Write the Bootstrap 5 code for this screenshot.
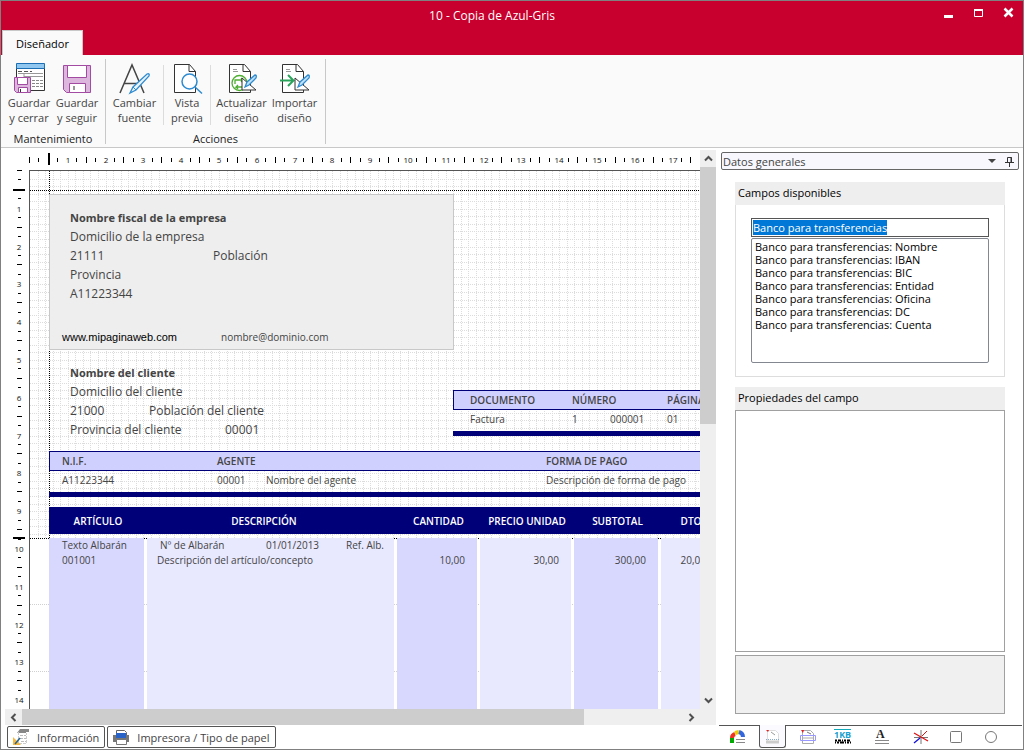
<!DOCTYPE html>
<html lang="es">
<head>
<meta charset="utf-8">
<meta name="viewport" content="width=device-width, initial-scale=1">
<title>10 - Copia de Azul-Gris</title>
<link href="https://cdn.jsdelivr.net/npm/bootstrap@5.3.0/dist/css/bootstrap.min.css" rel="stylesheet">
<style>
:root{--navy:#000078;--lilac:#d0d0ff;--col-a:#d8d8ff;--col-b:#e8e8ff;--ink:#444}
body{font-family:"Open Sans","Noto Sans",sans-serif;font-size:11px;line-height:15px;color:var(--ink);background:#fff;border:1px solid #808080;min-height:600px;overflow:hidden}
button{font:inherit;color:inherit;background:none;border:0;padding:0}
svg{display:block;flex:none}
.titlebar{background:#c8002d;color:#fff;height:29px}
.titlebar h1{font-size:12px;line-height:29px;padding-left:40px}
.win-btns{gap:16px;padding:5px 8px 0 0}
.tabs{background:#c8002d;height:25px}
.tab-on{background:#fafafa;color:#000;width:81px;margin-left:1px;border:1px solid #c8c8c8;border-bottom:0}
.ribbon{background:#fafafa;height:93px;border-bottom:1px solid #c8c8c8}
.rgroup{border-right:1px solid #c8c8c8;margin:4px 0 3px}
.rtools{height:72px}
.rtools button{width:48px;white-space:nowrap;padding-top:3px}
.rtools .wide{width:53px}
.rtools .slim{width:46px}
.rtools svg{margin:0 auto -1px}
.rsep{width:1px;height:60px;margin-top:6px;background:#dcdcdc}
.rname{color:#222;text-align:center}
.vruler{width:28px}
.hruler{height:22px}
.ruler text{font-size:8px;fill:#111;text-anchor:middle;font-family:"Open Sans",sans-serif}
.sheet{border-left:1px solid #555;border-top:1px solid #555;overflow:hidden;isolation:isolate}
.sheet-grid{position:absolute;inset:0;z-index:-1}
.sheet-body{padding:23px 0 0 19px;width:900px}
.company{width:405px;height:156px;background:#eee;border:1px solid #c8c8c8;padding:13px 0 0 20px;font-size:12px;line-height:19px}
.company .contact{margin:25px 0 0 -8px;color:#000}
.company .contact small{font-size:10px;color:var(--ink)}
.web{font-family:"Liberation Sans",Arial,sans-serif;font-size:11px}
.heading{font-size:11px;font-weight:700}
.customer{width:404px;padding:13px 0 0 21px;font-size:12px;line-height:19px;height:101px}
.docbox{margin-top:40px}
.w-zip{width:143px}.w-zip2{width:79px}.w-prov{width:155px}.w-web{width:159px}
.dtable{border-collapse:separate;border-spacing:0;table-layout:fixed;font-size:10px;line-height:15px;white-space:nowrap;width:900px}
.dtable th,.dtable td{padding:0}
.dtable th{font-weight:600}
.boxed th{background:var(--lilac);border-top:1px solid var(--navy);border-bottom:1px solid var(--navy);height:20px}
.boxed th:first-child{border-left:1px solid var(--navy)}
.boxed td{border-bottom:5px solid var(--navy);height:26px;vertical-align:top;padding-top:2px}
.lines{margin-top:10px}
.lines thead th{background:var(--navy);color:#fff;height:27px;text-align:center;padding-top:2px}
.lines tbody td{height:700px;vertical-align:top;background:var(--col-a);background-clip:padding-box;border-right:3px solid transparent;border-top:4px solid transparent;text-align:right;padding-right:12px}
.lines tbody td:nth-child(even){background-color:var(--col-b)}
.lines tbody td.txt{text-align:left;padding-left:13px;padding-right:0}
.lines tbody td.desc{padding-left:10px}
.note{padding-left:3px}
.note span{flex:none}
.note span:nth-child(1){width:106px}
.note span:nth-child(2){width:80px}
.sbar{background:#efefef}
.sbar button{display:flex;align-items:center;justify-content:center}
.vbar{width:16px;margin-top:2px}
.vbar button{height:17px}
.hbar{height:16px;margin-left:4px}
.hbar button{width:17px}
.thumb{background:#cdcdcd}
.vthumb{flex:0 0 46%}
.hthumb{flex:0 0 79%}
.foot{height:24px;padding:1px 0 0 6px;gap:2px}
.foot button{border:1px solid #555;border-radius:2px;height:22px;padding:0 5px 0 4px;background:#fff;gap:7px}
.side{width:307px;padding-left:1px}
.side-head{border:1px solid #666;border-radius:2px;background:#f7f7fd;height:18px;margin:4px 4px 12px 4px;padding:0 4px 0 1px}
.group-head{background:#eee;color:#000;height:23px;line-height:22px;padding-left:3px}
.group-body{border:1px solid #ddd;border-top:0;padding:13px 15px 13px}
.groups{padding:0 18px 11px 18px}
.props-group{margin-top:10px}
.field-in{border:1px solid #555;height:19px;line-height:15px;padding:0 1px 1px;color:#000;outline:0;width:100%}
.field-in::selection{background:#0078d7;color:#fff}
.field-list{border:1px solid #828790;height:125px;padding:0 3px;width:100%;overflow:hidden;color:#000;margin-top:1px;display:block;background:#fff;outline:0}
.field-list option{padding:0;min-height:0;height:13px;line-height:12px}
.props{border:1px solid #a0a0a0}
.hint{border:1px solid #a0a0a0;background:#f0f0f0;height:59px;margin-top:3px}
.side-tabs{height:24px;border-top:1px solid #555;margin:0 1px 0 2px;padding-left:1px}
.side-tabs button{width:35px;display:flex;justify-content:center;padding-top:3px;height:21px}
.side-tabs .on{width:27px;margin:-1px 4px 0;height:23px;border:1px solid #555;border-top:0;border-radius:0 0 3px 3px;background:#fafaff}
.side-tabs .tick{overflow:visible}
</style>
</head>
<body class="vh-100 d-flex flex-column">
<header>
  <div class="titlebar d-flex">
    <h1 class="flex-grow-1 text-center fw-normal m-0">10 - Copia de Azul-Gris</h1>
    <div class="win-btns d-flex align-items-start">
      <button aria-label="Minimizar"><svg width="14" height="14"><path d="M1 9h9v3H1z" fill="#fff"/></svg></button>
      <button aria-label="Maximizar"><svg width="14" height="14"><path d="M1.500 3.500h8v7h-8z" fill="none" stroke="#fff"/><path d="M1 3h9v2H1z" fill="#fff"/></svg></button>
      <button aria-label="Cerrar"><svg width="12" height="14"><path d="M1.500 2.500l8 8m0-8l-8 8" stroke="#fff" stroke-width="2.500"/></svg></button>
    </div>
  </div>
  <nav class="tabs d-flex"><button class="tab-on">Diseñador</button></nav>
</header>

<section class="ribbon d-flex" aria-label="Diseñador">
  <div class="rgroup">
    <div class="rtools d-flex ps-1 pe-1 align-items-start">
      <button><svg width="34" height="34" fill="none"><path d="M4.500 6v22.500h28V6z" fill="#fff" stroke="#333"/><path d="M4.500 1.500h28v5h-28z" fill="#8fc7f0" stroke="#1a6fb5"/><path d="M6 9.500h4m2 0h4m2 0h2" stroke="#555"/><path d="M6 11.500h25M12 14.500h19M12 12v9" stroke="#999"/><path d="M20 18.500h12M20 21.500h12M20 24.500h12" stroke="#888" stroke-dasharray="3 1"/><path d="M2.500 15.500h16v15H4.500l-2-2z" fill="#dcb6dc" stroke="#a34ba3"/><path d="M5.500 15.500h10v7h-10zM6.500 25.500h9v5h-9z" fill="#fff" stroke="#a34ba3"/><path d="M8.500 27v3" stroke="#333"/></svg>Guardar<br>y cerrar</button>
      <button><svg width="34" height="34" fill="none"><path d="M3.500 3.500h27v27h-24l-3-3z" fill="#dcb6dc" stroke="#a34ba3"/><path d="M7.500 3.500h19v12h-19zM9.500 21.500h16v9h-16z" fill="#fff" stroke="#a34ba3"/><path d="M14 24v4" stroke="#333"/></svg>Guardar<br>y seguir</button>
    </div>
    <div class="rname">Mantenimiento</div>
  </div>
  <div class="rgroup">
    <div class="rtools d-flex align-items-start pe-1">
      <button class="wide mx-1 ms-0 ps-1"><svg width="34" height="34" fill="none"><path d="M2 31L14 3l12 28M6 21.500h15" stroke="#444" stroke-width="1.500"/><path d="M12 31l3-6 14-13q3-1 2 2L18 28z" fill="#e8f3fb" stroke="#2e8bd0" stroke-width="1.300"/><path d="M15 25l3 3" stroke="#2e8bd0"/></svg>Cambiar<br>fuente</button>
      <div class="rsep"></div>
      <button class="slim"><svg width="34" height="34" fill="none"><path d="M4.500 2.500h15l6 7v21h-21z" fill="#fff" stroke="#333"/><path d="M19 2.500v7h6.500" stroke="#333"/><circle cx="19.500" cy="19.500" r="7.500" fill="#fff" stroke="#2e8bd0" stroke-width="1.500"/><path d="M25 25l7 6.500" stroke="#2e8bd0" stroke-width="1.500"/></svg>Vista<br>previa</button>
      <div class="rsep me-1"></div>
      <button class="wide"><svg width="34" height="34" fill="none"><path d="M4.500 2.500h15l6 7v21h-21z" fill="#fff" stroke="#333"/><path d="M18 2.500v7h7.500" stroke="#333"/><path d="M8 7.500h4M8 9.500h5" stroke="#999"/><circle cx="14.500" cy="21" r="7.500" stroke="#4fae32" stroke-width="1.300"/><path d="M10 22v-4h8l-2-2m2 2l-2 2M19 20v5h-8l2-2m-2 2l2 2" stroke="#4fae32" stroke-width="1.300"/><path d="M17 16v12h14z" fill="#fff" stroke="#333"/><path d="M20 25l2-5 8-7q2 0 1 3l-7 7z" fill="#bfe0f6" stroke="#2e8bd0" stroke-width="1.300"/></svg>Actualizar<br>diseño</button>
      <button class="wide"><svg width="34" height="34" fill="none"><path d="M4.500 2.500h15l6 7v21h-21z" fill="#fff" stroke="#333"/><path d="M18 2.500v7h7.500" stroke="#333"/><path d="M8 7.500h4M8 9.500h5" stroke="#999"/><path d="M2 18.500h13M10 13l5.500 5.500L10 24" stroke="#2aa35b" stroke-width="2"/><path d="M17 16v12h14z" fill="#fff" stroke="#333"/><path d="M20 25l2-5 8-7q2 0 1 3l-7 7z" fill="#bfe0f6" stroke="#2e8bd0" stroke-width="1.300"/></svg>Importar<br>diseño</button>
    </div>
    <div class="rname">Acciones</div>
  </div>
</section>

<main class="d-flex flex-grow-1 overflow-hidden">
  <div class="d-flex flex-column flex-grow-1 overflow-hidden">
    <div class="d-flex flex-grow-1 overflow-hidden">
      <div class="d-flex flex-column flex-grow-1 overflow-hidden">
        <svg class="ruler hruler w-100" id="hr"></svg>
        <div class="d-flex flex-grow-1 overflow-hidden">
          <div class="vruler flex-shrink-0 overflow-hidden"><svg class="ruler" id="vr" width="28" height="100%"></svg></div>
          <div class="sheet position-relative flex-grow-1">
            <svg class="sheet-grid" id="grid" width="100%" height="100%"></svg>
            <div class="sheet-body">
              <section class="company">
                <div class="heading">Nombre fiscal de la empresa</div>
                <div>Domicilio de la empresa</div>
                <div class="d-flex"><span class="w-zip">21111</span><span>Población</span></div>
                <div>Provincia</div>
                <div>A11223344</div>
                <div class="contact d-flex"><span class="w-web web">www.mipaginaweb.com</span><small>nombre@dominio.com</small></div>
              </section>
              <div class="d-flex">
                <section class="customer flex-shrink-0">
                  <div class="heading">Nombre del cliente</div>
                  <div>Domicilio del cliente</div>
                  <div class="d-flex"><span class="w-zip2">21000</span><span>Población del cliente</span></div>
                  <div class="d-flex"><span class="w-prov">Provincia del cliente</span><span>00001</span></div>
                </section>
                <section class="docbox">
                  <table class="dtable boxed">
                    <colgroup><col style="width:17px"><col style="width:102px"><col style="width:38px"><col style="width:57px"><col></colgroup>
                    <tr><th></th><th>DOCUMENTO</th><th colspan="2">NÚMERO</th><th>PÁGINA</th></tr>
                    <tr><td></td><td>Factura</td><td>1</td><td>000001</td><td>01</td></tr>
                  </table>
                </section>
              </div>
              <table class="dtable boxed">
                <colgroup><col style="width:13px"><col style="width:155px"><col style="width:49px"><col style="width:280px"><col></colgroup>
                <tr><th></th><th>N.I.F.</th><th colspan="2">AGENTE</th><th>FORMA DE PAGO</th></tr>
                <tr><td></td><td>A11223344</td><td>00001</td><td>Nombre del agente</td><td>Descripción de forma de pago</td></tr>
              </table>
              <table class="dtable lines">
                <colgroup><col style="width:98px"><col style="width:250px"><col style="width:83px"><col style="width:94px"><col style="width:87px"><col style="width:60px"><col></colgroup>
                <thead><tr><th>ARTÍCULO</th><th class="pe-3">DESCRIPCIÓN</th><th>CANTIDAD</th><th>PRECIO UNIDAD</th><th>SUBTOTAL</th><th>DTO</th><th></th></tr></thead>
                <tbody><tr>
                  <td class="txt">Texto Albarán<br>001001</td>
                  <td class="txt desc"><div class="note d-flex"><span>Nº de Albarán</span><span>01/01/2013</span><span>Ref. Alb.</span></div>Descripción del artículo/concepto</td>
                  <td><br>10,00</td><td><br>30,00</td><td><br>300,00</td><td><br>20,00</td><td></td>
                </tr></tbody>
              </table>
            </div>
          </div>
        </div>
      </div>
      <div class="sbar vbar d-flex flex-column flex-shrink-0">
        <button aria-label="Subir"><svg width="9" height="7" fill="none" stroke="#505050" stroke-width="2"><path d="M1 5.500l3.500-3.500 3.500 3.500"/></svg></button>
        <div class="thumb vthumb"></div>
        <button class="mt-auto" aria-label="Bajar"><svg width="9" height="7" fill="none" stroke="#505050" stroke-width="2"><path d="M1 1.500l3.500 3.500 3.500-3.500"/></svg></button>
      </div>
    </div>
    <div class="sbar hbar d-flex flex-shrink-0">
      <button aria-label="Izquierda"><svg width="7" height="9" fill="none" stroke="#505050" stroke-width="2"><path d="M5.500 1l-3.500 3.500 3.500 3.500"/></svg></button>
      <div class="thumb hthumb"></div>
      <button class="ms-auto me-3" aria-label="Derecha"><svg width="7" height="9" fill="none" stroke="#505050" stroke-width="2"><path d="M1.500 1l3.500 3.500-3.500 3.500"/></svg></button>
    </div>
    <footer class="foot d-flex flex-shrink-0">
      <button class="d-flex align-items-center"><svg width="18" height="18" fill="none"><path d="M8 1h9v3h-3v1H5z" fill="#888"/><path d="M6.500 4v11.500h8V5" stroke="#ccc" stroke-dasharray="3 1"/><path d="M8 7.500h6m-6 3h6m-5 3h5" stroke="#bbb" stroke-dasharray="3 1"/><path d="M1 9v8h8z" fill="#f5b942"/><path d="M3 16l5-6" stroke="#28638c" stroke-width="1.500"/></svg>Información</button>
      <button class="d-flex align-items-center"><svg width="18" height="18" fill="none"><path d="M4.500 7V2.500h8l2 2V7" fill="#fff" stroke="#666"/><path d="M1 7h16v7H1z" fill="#777"/><path d="M4 5h10v5H4z" fill="#2a63c8"/><path d="M4.500 11.500h10v5h-10z" fill="#fff" stroke="#777"/></svg>Impresora / Tipo de papel</button>
    </footer>
  </div>

  <aside class="side d-flex flex-column flex-shrink-0">
    <div class="side-head d-flex align-items-center flex-shrink-0"><span class="flex-grow-1">Datos generales</span>
      <svg width="9" height="6" class="me-2"><path d="M0 1h8L4 5z" fill="#444"/></svg>
      <button aria-label="Fijar"><svg width="9" height="11" fill="none" stroke="#333"><path d="M2.500 6V1.500h4V6M0 6.500h9M4.500 7v4"/><path d="M6 1v5"/></svg></button>
    </div>
    <div class="groups d-flex flex-column flex-grow-1">
      <section>
        <div class="group-head"><label for="campo">Campos disponibles</label></div>
        <div class="group-body">
          <input class="field-in d-block" id="campo" value="Banco para transferencias">
          <select class="field-list" size="9" aria-label="Campos">
            <option>Banco para transferencias: Nombre</option><option>Banco para transferencias: IBAN</option><option>Banco para transferencias: BIC</option><option>Banco para transferencias: Entidad</option><option>Banco para transferencias: Oficina</option><option>Banco para transferencias: DC</option><option>Banco para transferencias: Cuenta</option>
          </select>
        </div>
      </section>
      <section class="props-group d-flex flex-column flex-grow-1">
        <div class="group-head">Propiedades del campo</div>
        <div class="props flex-grow-1"></div>
        <div class="hint"></div>
      </section>
    </div>
    <nav class="side-tabs d-flex flex-shrink-0">
      <button aria-label="Datos"><svg width="18" height="16" fill="none"><path d="M3 14V9" stroke="#0a0" stroke-width="4"/><path d="M3 9q0-3 3-4" stroke="#e32" stroke-width="4"/><path d="M6 4l4-1" stroke="#ec0" stroke-width="4"/><path d="M10 3q4 1 4 5" stroke="#36d" stroke-width="4"/><path d="M7 10.500h9M7 13.500h9" stroke="#888"/></svg></button>
      <button class="on" aria-label="Cabecera"><svg width="18" height="17" fill="none"><path d="M3.500 2.500h8l3 3v8h-11z" fill="#fff" stroke="#ddd"/><path d="M2 2h3l-1 2z" fill="#d22"/><path d="M7 4l4 3" stroke="#999"/><path d="M2 12.500h13v3H2z" fill="#ccc"/><path d="M2 11.500h13" stroke="#8ac" stroke-dasharray="1 1"/></svg></button>
      <button aria-label="Líneas"><svg width="18" height="16" fill="none"><path d="M3.500 1.500h8l3 3v10h-11z" fill="#fff" stroke="#aaa"/><path d="M2 1h3l-1 3z" fill="#d22"/><path d="M8 3l4 2" stroke="#777"/><path d="M1.500 6.500h15v5h-15z" stroke="#99f"/><path d="M4 9h10" stroke="#aaa"/></svg></button>
      <button aria-label="Código de barras"><svg width="18" height="16" fill="none"><path d="M0 .5h17" stroke="#1ab"/><text x="0" y="9" font-size="9" font-weight="bold" fill="#1a9fd0">1KB</text><path d="M1 11.500h16" stroke="#000" stroke-width="2" stroke-dasharray="2 1 3 1 1 1"/><path d="M1 13.500h16" stroke="#000" stroke-width="2" stroke-dasharray="1 1 2 1 4 1"/></svg></button>
      <button class="ms-1" aria-label="Texto"><svg class="tick" width="16" height="16" fill="none"><text x="2" y="9" font-size="12" font-weight="bold" font-family="Liberation Serif,serif" fill="#222">A</text><path d="M1 11.500h14M1 14.500h14" stroke="#888"/></svg></button>
      <button class="ms-1" aria-label="Líneas libres"><svg width="16" height="16" fill="none"><path d="M8 1v14M1 8.500h14" stroke="#777"/><path d="M1 4l14 8" stroke="#d11" stroke-width="1.300"/><path d="M14 2L9 7" stroke="#d11"/><path d="M7 9l-6 5" stroke="#11d" stroke-width="1.300"/></svg></button>
      <button aria-label="Rectángulo"><svg width="14" height="16"><rect x="1.500" y="2.500" width="11" height="11" rx="1" fill="none" stroke="#777"/></svg></button>
      <button aria-label="Elipse"><svg width="14" height="16"><circle cx="7" cy="8" r="5.500" fill="none" stroke="#777"/></svg></button>
    </nav>
  </aside>
</main>
<script src="https://cdn.jsdelivr.net/npm/bootstrap@5.3.0/dist/js/bootstrap.bundle.min.js"></script>
<script>
// One centimetre at 96 dpi
const CM = 37.795, R = Math.round;
const $ = id => document.getElementById(id);
const rect = (x, y, w, h) => `<rect x="${x}" y="${y}" width="${w}" height="${h}" fill="#000"/>`;
const line = (x1, y1, x2, y2, c) => `<path d="M${x1} ${y1}L${x2} ${y2}" stroke="${c}" stroke-dasharray="1 1" shape-rendering="crispEdges"/>`;

function drawRulers() {
  const W = $('hr').getBoundingClientRect().width - 36, H = $('vr').getBoundingClientRect().height - 4;
  let h = rect(47, 5, 2, 12), v = rect(12, 19, 12, 2) + rect(12, 367, 12, 2);
  for (let q = 0; R(q * CM / 4) < Math.max(W, H); q++) {
    const p = R(q * CM / 4), inH = p < W, inV = p < H;
    if (q % 4 === 0 && q) {
      if (inH) h += `<text x="${p + 29}" y="15">${q / 4}</text>`;
      if (inV) v += `<text x="18" y="${p + 4}">${q / 4}</text>`;
    } else if (q % 2) {
      if (inH) h += rect(28 + p, 10, 1, 4);
      if (inV) v += rect(17, p, 3, 1);
    } else if (q !== 2) {
      if (inH) h += rect(28 + p, 9, 1, 6);
      if (inV) v += rect(16, p, 5, 1);
    }
  }
  $('hr').innerHTML = h;
  $('vr').innerHTML = v;
}

// Dotted 2 mm grid, page margins and the start of the detail band
function drawGrid() {
  let g = '';
  for (let i = 1; i < 300; i++) {
    const p = R(i * CM / 5) + .5;
    g += line(p, 0, p, 367, '#dcdcdc');
    if (p < 366) g += line(0, p, 2400, p, '#dcdcdc');
  }
  for (let y = 433.5; y < 2000; y += 67) g += line(0, y, 2400, y, '#d0d0d0');
  g += line(0, 19.5, 2400, 19.5, '#000') + line(19.5, 0, 19.5, 367, '#000') + line(0, 367.5, 2400, 367.5, '#000');
  $('grid').innerHTML = g;
}
drawRulers();
drawGrid();
addEventListener('resize', drawRulers);

$('campo').focus();
$('campo').select();
</script>
</body>
</html>
